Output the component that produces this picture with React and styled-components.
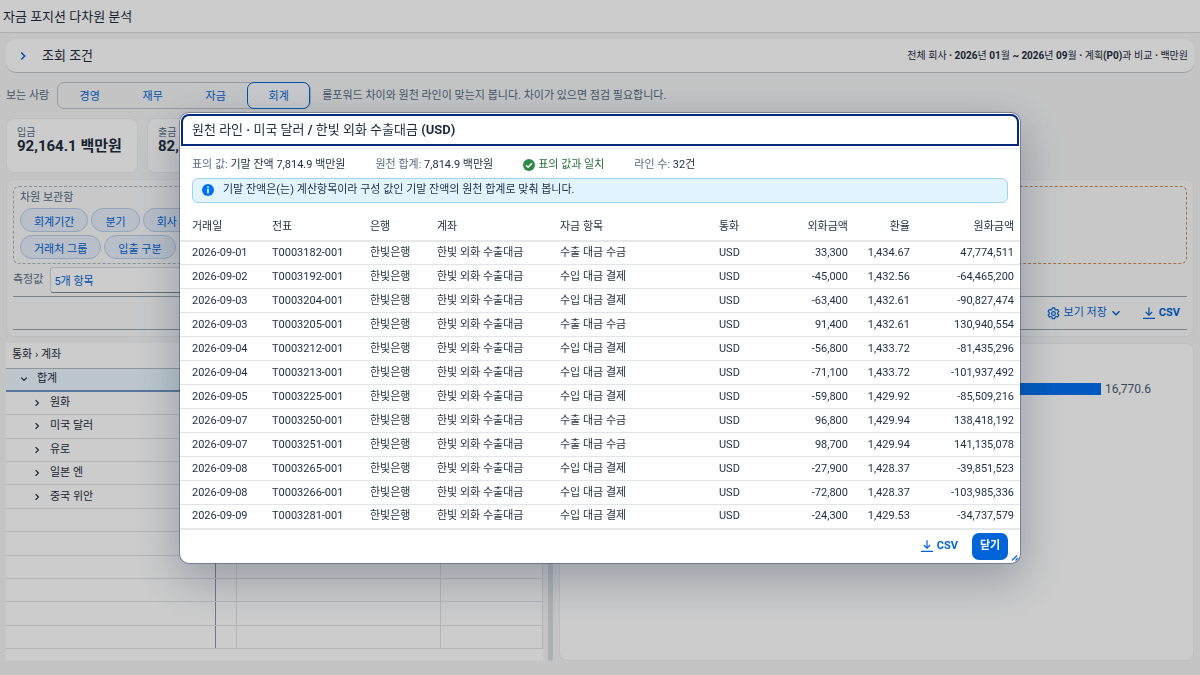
import React from 'react';
import styled, { createGlobalStyle, css } from 'styled-components';

const Global = createGlobalStyle`
  *, *::before, *::after { box-sizing: border-box; }
  body {
    margin: 0;
    background: #f5f6f7;
    color: #1d2d3e;
    font-family: Roboto, 'Noto Sans CJK KR', sans-serif;
    font-size: 11px;
    line-height: 16px;
    overflow: hidden;
  }
  button, input { font: inherit; color: inherit; margin: 0; }
  h1, h2, p { margin: 0; font-weight: 400; }
`;

/* ---------- shared ---------- */

const LATIN = /([A-Za-z0-9()~·/]+)/;

function Mixed({ text }) {
  return text
    .split(LATIN)
    .map((part, i) => (i % 2 ? <strong key={i}>{part}</strong> : part));
}

const Svg = styled.svg`
  width: ${(p) => p.$size || 12}px;
  height: ${(p) => p.$size || 12}px;
  flex: none;
  fill: none;
  stroke: currentColor;
  stroke-width: ${(p) => p.$stroke || 1.5};
`;

const Chevron = ({ down, size = 8 }) => (
  <Svg viewBox="0 0 8 8" $size={size} $stroke={1.2} aria-hidden="true">
    <path d={down ? 'M1.2 2.6 4 5.4 6.8 2.6' : 'M2.6 1.2 5.4 4 2.6 6.8'} />
  </Svg>
);

const Download = () => (
  <Svg viewBox="0 0 12 12" $stroke={1.2} aria-hidden="true">
    <path d="M6 0.2V8M2.8 5 6 8.2 9.2 5M0 11.3H12" />
  </Svg>
);

const Gear = () => (
  <Svg viewBox="0 0 24 24" $size={13} $stroke={2.2} strokeLinejoin="round" aria-hidden="true">
    <circle cx="12" cy="12" r="3.4" />
    <path d="M9.8 1.5h4.4l.6 3 2 1.1 2.9-1 2.2 3.8-2.3 2v2.3l2.3 2-2.2 3.8-2.9-1-2 1.1-.6 3H9.8l-.6-3-2-1.1-2.9 1-2.2-3.8 2.3-2v-2.3l-2.3-2 2.2-3.8 2.9 1 2-1.1z" />
  </Svg>
);

const Panel = styled.section`
  background: #fff;
  border: 1px solid ${(p) => p.$border || '#eceef0'};
  border-radius: 8px;
`;

const Muted = styled.span`
  color: #556b82;
`;

const GhostButton = styled.button`
  display: flex;
  align-items: center;
  gap: 4px;
  height: 26px;
  padding: 0 6px;
  border: 0;
  border-radius: 6px;
  background: transparent;
  color: #0064d9;
`;

/* ---------- page ---------- */

const Page = styled.div`
  display: flex;
  flex-direction: column;
  min-height: 100vh;
`;

const TopBar = styled.header`
  height: 33px;
  padding: 9px 3px 0;
  background: #fff;
  border-bottom: 1px solid #d9d9d9;

  h1 { font-size: 13px; }
`;

const Content = styled.main`
  flex: 1;
  display: flex;
  flex-direction: column;
  padding: 6px 6px 14px;
`;

const QueryBar = styled.section`
  display: flex;
  align-items: center;
  height: 34px;
  padding: 0 6px 0 12px;
  background: #fff;
  border-bottom: 1px solid #c0c6cc;
  border-radius: 10px;

  h2 { flex: 1; font-size: 13px; }
  p { font-size: 10px; }
`;

const ExpandButton = styled.button`
  display: flex;
  width: 24px;
  height: 24px;
  padding: 7px 0;
  border: 0;
  background: transparent;
  color: #0064d9;
`;

const ViewerRow = styled.div`
  display: flex;
  align-items: center;
  height: 27px;
  margin-top: 9px;
`;

const Segments = styled.div`
  display: flex;
  height: 27px;
  margin: 0 11px 0 8px;
  border: 1px solid #bcc3ca;
  border-radius: 7px;
`;

const Segment = styled.button`
  width: 63px;
  height: 27px;
  margin: -1px 0;
  padding: 3px 0 0;
  border: 1px solid ${(p) => (p.$active ? '#0064d9' : 'transparent')};
  border-radius: 7px;
  background: ${(p) => (p.$active ? '#fafcff' : 'transparent')};
  color: #0064d9;
`;

const Cards = styled.div`
  display: flex;
  gap: 9px;
  margin-top: 9px;
`;

const Card = styled(Panel)`
  width: 132px;
  height: 55px;
  padding: 6px 10px;

  span { display: block; height: 12px; color: #556b82; font-size: 10px; }
  strong { display: block; font-size: 15px; line-height: 18px; white-space: nowrap; }
`;

const Builder = styled(Panel)`
  margin-top: 6px;
  padding: 6px;
  background: #fafbfc;
`;

const Zones = styled.div`
  display: grid;
  grid-template-columns: 1fr 1fr;
  gap: 6px;
`;

const Zone = styled.div`
  height: 78px;
  padding: 3px 6px;
  border: 1px dashed ${(p) => p.$color};
  border-radius: 6px;
`;

const ChipRow = styled.div`
  display: flex;
  gap: 3px;
  margin: 2px 0 3px;
`;

const Chip = styled.button`
  height: 24px;
  padding: 5px 13px 0;
  border: 1px solid #b9cfe8;
  border-radius: 12px;
  background: #e6effb;
  color: #0064d9;
  line-height: 16px;
`;

const MeasureRow = styled.div`
  display: flex;
  align-items: center;
  gap: 7px;
  margin: 3px 0;

  label { color: #556b82; }
`;

const MeasureInput = styled.input`
  width: 240px;
  height: 26px;
  padding: 0 3px;
  border: 1px solid #d5dadf;
  border-bottom-color: #7a8794;
  border-radius: 3px;
  background: #fff;
  color: #0064d9;
`;

const Toolbar = styled.div`
  display: flex;
  align-items: center;
  justify-content: flex-end;
  gap: 10px;
  height: 34px;
  padding-right: 1px;
  border: solid #98a3ae;
  border-width: 1px 0;
`;

const Split = styled.div`
  flex: 1;
  display: grid;
  grid-template-columns: 537fr 16px 635fr;
  margin-top: 6px;
`;

const TreePane = styled.section`
  background: #fff;
`;

const Tree = styled.table`
  width: 100%;
  height: 306px;
  border-collapse: collapse;
  table-layout: fixed;
  border-bottom: 1px solid #98a3ae;

  th, td {
    height: 23px;
    padding: 0;
    border-bottom: 1px solid #dfe2e5;
    border-right: 1px solid #dfe2e5;
    font-weight: 400;
    text-align: left;
  }
  tr > :first-child { border-right-color: #8c97a2; }
  thead th { height: 25px; padding-left: 6px; border-bottom-color: #b4bcc4; }
`;

const TreeRow = styled.tr`
  ${(p) =>
    p.$selected &&
    css`
      background: #ebf8ff;
      td { border-bottom: 2px solid #6f96c4; }
    `}
`;

const NodeCell = styled.div`
  display: flex;
  align-items: center;
  gap: 9px;
  padding-left: ${(p) => (p.$level ? 27 : 14)}px;

  button {
    display: flex;
    padding: 0;
    border: 0;
    background: transparent;
  }
`;

const Splitter = styled.div`
  width: 5px;
  margin-left: 5px;
  border-radius: 2px;
  background: #d9dce0;
`;

const BarLine = styled.div`
  display: flex;
  align-items: center;
  gap: 4px;
  margin: 37px 42px 0 60px;
  color: #475e75;
  font-size: 12px;

  span { flex: 1; height: 12px; background: #0070f2; }
`;

/* ---------- dialog ---------- */

const Backdrop = styled.div`
  position: fixed;
  inset: 0;
  display: flex;
  align-items: center;
  justify-content: center;
  background: rgba(0, 0, 0, 0.2);
`;

const Dialog = styled.div`
  position: relative;
  width: 70%;
  border-radius: 9px;
  background: #fff;
  box-shadow: 0 0 0 1px rgba(34, 53, 100, 0.4), 0 14px 44px 4px rgba(34, 53, 84, 0.3);
`;

const DialogHeader = styled.header`
  padding: 1px 1px 2px;
  border-bottom: 1px solid #e8eaec;

  h2 {
    height: 32px;
    padding: 5px 9px;
    border: 2px solid #06297e;
    border-radius: 8px 8px 0 0;
    font-size: 13px;
    line-height: 17px;
  }
`;

const Facts = styled.div`
  display: flex;
  gap: 30px;
  padding: 8px 12px 5px;
`;

const Match = styled.span`
  display: flex;
  align-items: center;
  gap: 3px;
  color: #256f3a;
`;

const InfoStrip = styled.div`
  display: flex;
  align-items: center;
  gap: 9px;
  height: 25px;
  margin: 0 12px;
  padding: 0 9px;
  border: 1px solid #9ed3ea;
  border-radius: 6px;
  background: #e1f4ff;
`;

const Lines = styled.table`
  width: 100%;
  margin-top: 11px;
  border-collapse: collapse;
  table-layout: fixed;

  th, td {
    height: 24px;
    padding: 0 6px;
    border-bottom: 1px solid #e2e5e8;
    font-weight: 400;
    text-align: left;
    white-space: nowrap;
  }
  th { height: 27px; border-bottom: 2px solid #e5e7e9; }
  tr > :first-child { padding-left: 12px; }
  tr > :nth-child(n + 7) { text-align: right; }
  tbody tr:last-child td { border-bottom: 2px solid #e5e7e9; }
`;

const DialogFooter = styled.footer`
  display: flex;
  align-items: center;
  justify-content: flex-end;
  gap: 8px;
  height: 33px;
  padding: 0 12px;
`;

const CloseButton = styled.button`
  width: 36px;
  height: 27px;
  padding: 0;
  border: 0;
  border-radius: 7px;
  background: #0064d9;
  color: #fff;
  font-weight: 700;
`;

const ResizeGrip = styled(Svg)`
  position: absolute;
  right: 1px;
  bottom: 1px;
  color: #0064d9;
`;

/* ---------- data ---------- */

const VIEWERS = ['경영', '재무', '자금', '회계'];
const CHIPS = [
  ['회계기간', '분기', '회사'],
  ['거래처 그룹', '입출 구분'],
];
const NODES = ['원화', '미국 달러', '유로', '일본 엔', '중국 위안'];
const COLUMNS = [
  ['거래일', 86], ['전표', 98], ['은행', 67], ['계좌', 123], ['자금 항목', 159],
  ['통화', 71], ['외화금액', 70], ['환율', 62], ['원화금액', 104],
];
const IN = '수출 대금 수금';
const OUT = '수입 대금 결제';
const ROWS = [
  ['2026-09-01', 'T0003182-001', IN, '33,300', '1,434.67', '47,774,511'],
  ['2026-09-02', 'T0003192-001', OUT, '-45,000', '1,432.56', '-64,465,200'],
  ['2026-09-03', 'T0003204-001', OUT, '-63,400', '1,432.61', '-90,827,474'],
  ['2026-09-03', 'T0003205-001', IN, '91,400', '1,432.61', '130,940,554'],
  ['2026-09-04', 'T0003212-001', OUT, '-56,800', '1,433.72', '-81,435,296'],
  ['2026-09-04', 'T0003213-001', OUT, '-71,100', '1,433.72', '-101,937,492'],
  ['2026-09-05', 'T0003225-001', OUT, '-59,800', '1,429.92', '-85,509,216'],
  ['2026-09-07', 'T0003250-001', IN, '96,800', '1,429.94', '138,418,192'],
  ['2026-09-07', 'T0003251-001', IN, '98,700', '1,429.94', '141,135,078'],
  ['2026-09-08', 'T0003265-001', OUT, '-27,900', '1,428.37', '-39,851,523'],
  ['2026-09-08', 'T0003266-001', OUT, '-72,800', '1,428.37', '-103,985,336'],
  ['2026-09-09', 'T0003281-001', OUT, '-24,300', '1,429.53', '-34,737,579'],
];

function SourceDialog() {
  return (
    <Backdrop>
      <Dialog role="dialog" aria-modal="true" aria-labelledby="dialog-title">
        <DialogHeader>
          <h2 id="dialog-title">
            <Mixed text="원천 라인 · 미국 달러 / 한빛 외화 수출대금 (USD)" />
          </h2>
        </DialogHeader>
        <Facts>
          <span><Muted>표의 값:</Muted> 기말 잔액 7,814.9 백만원</span>
          <span><Muted>원천 합계:</Muted> 7,814.9 백만원</span>
          <Match>
            <Svg viewBox="0 0 12 12" aria-hidden="true">
              <circle cx="6" cy="6" r="6" fill="#2e8b47" stroke="none" />
              <path d="M3 6.2 5.1 8.3 9 4.2" stroke="#fff" />
            </Svg>
            표의 값과 일치
          </Match>
          <span><Muted>라인 수:</Muted> 32건</span>
        </Facts>
        <InfoStrip>
          <Svg viewBox="0 0 12 12" aria-hidden="true">
            <circle cx="6" cy="6" r="6" fill="#0070f2" stroke="none" />
            <path d="M6 2.3V3.7M6 4.8V9.6" stroke="#fff" />
          </Svg>
          기말 잔액은(는) 계산항목이라 구성 값인 기말 잔액의 원천 합계로 맞춰 봅니다.
        </InfoStrip>
        <Lines>
          <colgroup>
            {COLUMNS.map(([name, share]) => (
              <col key={name} style={{ width: `${share / 8.4}%` }} />
            ))}
          </colgroup>
          <thead>
            <tr>{COLUMNS.map(([name]) => <th key={name} scope="col">{name}</th>)}</tr>
          </thead>
          <tbody>
            {ROWS.map(([date, slip, item, fx, rate, krw]) => (
              <tr key={slip}>
                <td>{date}</td>
                <td>{slip}</td>
                <td>한빛은행</td>
                <td>한빛 외화 수출대금</td>
                <td>{item}</td>
                <td>USD</td>
                <td>{fx}</td>
                <td>{rate}</td>
                <td>{krw}</td>
              </tr>
            ))}
          </tbody>
        </Lines>
        <DialogFooter>
          <GhostButton type="button"><Download /><strong>CSV</strong></GhostButton>
          <CloseButton type="button">닫기</CloseButton>
        </DialogFooter>
        <ResizeGrip viewBox="0 0 8 8" $size={8} $stroke={1.2} aria-hidden="true">
          <path d="M1 6.5 6 1.5M4.5 6.5 7 4" />
        </ResizeGrip>
      </Dialog>
    </Backdrop>
  );
}

export default function App() {
  return (
    <>
      <Global />
      <Page>
        <TopBar><h1>자금 포지션 다차원 분석</h1></TopBar>
        <Content>
          <QueryBar>
            <ExpandButton type="button" aria-label="조회 조건"><Chevron size={10} /></ExpandButton>
            <h2>조회 조건</h2>
            <p><Mixed text="전체 회사 · 2026년 01월 ~ 2026년 09월 · 계획(P0)과 비교 · 백만원" /></p>
          </QueryBar>
          <ViewerRow>
            <Muted>보는 사람</Muted>
            <Segments>
              {VIEWERS.map((name) => (
                <Segment key={name} type="button" $active={name === '회계'}>{name}</Segment>
              ))}
            </Segments>
            <Muted>롤포워드 차이와 원천 라인이 맞는지 봅니다. 차이가 있으면 점검 필요합니다.</Muted>
          </ViewerRow>
          <Cards>
            <Card><span>입금</span><strong>92,164.1 백만원</strong></Card>
            <Card><span>출금</span><strong>82,</strong></Card>
          </Cards>
          <Builder>
            <Zones>
              <Zone $color="#a9b4be">
                <Muted>차원 보관함</Muted>
                {CHIPS.map((row) => (
                  <ChipRow key={row[0]}>
                    {row.map((name) => <Chip key={name} type="button">{name}</Chip>)}
                  </ChipRow>
                ))}
              </Zone>
              <Zone $color="#d08a4e" />
            </Zones>
            <MeasureRow>
              <label htmlFor="measure">측정값</label>
              <MeasureInput id="measure" defaultValue="5개 항목" />
            </MeasureRow>
            <Toolbar>
              <GhostButton type="button"><Gear />보기 저장 <Chevron down size={10} /></GhostButton>
              <GhostButton type="button"><Download /><strong>CSV</strong></GhostButton>
            </Toolbar>
          </Builder>
          <Split>
            <TreePane>
              <Tree>
                <colgroup>
                  <col style={{ width: '39%' }} />
                  <col style={{ width: '4%' }} />
                  <col style={{ width: '38%' }} />
                  <col style={{ width: '19%' }} />
                </colgroup>
                <thead>
                  <tr><th scope="col">통화 › 계좌</th><th /><th /><th /></tr>
                </thead>
                <tbody>
                  <TreeRow $selected>
                    <td>
                      <NodeCell>
                        <button type="button" aria-label="합계"><Chevron down /></button>합계
                      </NodeCell>
                    </td>
                    <td /><td /><td />
                  </TreeRow>
                  {NODES.map((name) => (
                    <TreeRow key={name}>
                      <td>
                        <NodeCell $level={1}>
                          <button type="button" aria-label={name}><Chevron /></button>{name}
                        </NodeCell>
                      </td>
                      <td /><td /><td />
                    </TreeRow>
                  ))}
                  {[0, 1, 2, 3, 4, 5].map((n) => (
                    <TreeRow key={n}><td /><td /><td /><td /></TreeRow>
                  ))}
                </tbody>
              </Tree>
            </TreePane>
            <Splitter />
            <Panel>
              <BarLine><span />16,770.6</BarLine>
            </Panel>
          </Split>
        </Content>
      </Page>
      <SourceDialog />
    </>
  );
}
